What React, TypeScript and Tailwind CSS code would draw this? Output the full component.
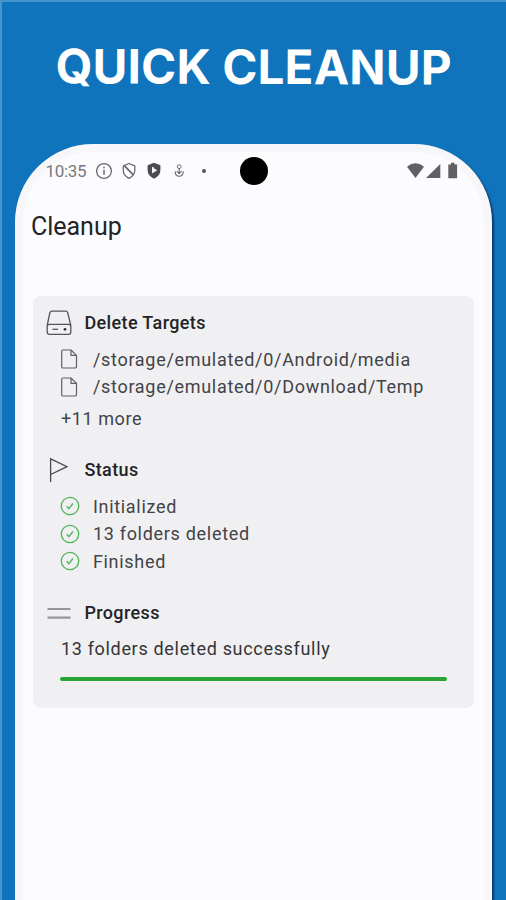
import type { ReactNode } from 'react';

const targets = ['/storage/emulated/0/Android/media', '/storage/emulated/0/Download/Temp'];
const steps = ['Initialized', '13 folders deleted', 'Finished'];

function DriveIcon() {
  return (
    <svg width="26" height="26" viewBox="0 0 26 26" fill="none" stroke="#55565a" strokeWidth="1.3" strokeLinejoin="round">
      <path d="M1.2 15.5 3.8 3Q4.3 1.2 6 1.2H19.6Q21.3 1.2 21.8 3L24.8 15.5" />
      <rect x="1.2" y="14.3" width="23.6" height="10" rx="2.2" />
      <path d="M6.5 19.3h5.5" />
      <circle cx="19" cy="19.3" r="1.4" fill="#333" stroke="none" />
    </svg>
  );
}

function FlagIcon() {
  return (
    <svg width="26" height="26" viewBox="0 0 26 26" fill="none" stroke="#4b4c50" strokeWidth="1.3">
      <path d="M4.6 25V1.8L21 9.7 4.6 17.5" />
    </svg>
  );
}

function LinesIcon() {
  return (
    <svg width="26" height="26" viewBox="0 0 26 26" stroke="#96979a" strokeWidth="2.2">
      <path d="M1.5 9h23M1.5 17.6h23" />
    </svg>
  );
}

function FileIcon() {
  return (
    <svg width="18" height="20" viewBox="0 0 18 20" fill="none" stroke="#606165" strokeWidth="1.2" strokeLinejoin="round">
      <path d="M1.7 2.2Q1.7 1 2.9 1H11l5.5 5.4V17.7q0 1.3-1.3 1.3H3q-1.3 0-1.3-1.3z" />
      <path d="M11 1v5.4h5.5" />
    </svg>
  );
}

function CheckIcon() {
  return (
    <svg width="20" height="20" viewBox="0 0 20 20" fill="none" stroke="#4db45a" strokeWidth="1.3">
      <circle cx="10" cy="10" r="8.7" />
      <path d="M6.7 10.3l2.2 2.4 4-5.2" />
    </svg>
  );
}

function StatusBar() {
  return (
    <div className="flex h-[39px] items-center pl-[22px] pr-[23px]">
      <span className="w-[51px] text-[17px] leading-[20px] tracking-[-0.3px] text-[#77787b]">10:35</span>
      <svg width="116" height="18" viewBox="96 162.500 116 18" fill="none" stroke="#6b6b6e" strokeWidth="1.3">
        <circle cx="104" cy="171.5" r="7.4" />
        <path d="M104 170.3v5M104 167.2v1.6" strokeWidth="1.5" />
        <path d="M123.3 166.3 129 164l5.8 2.300v4.500q0 5.200-5.800 8-5.700-2.800-5.700-8z" strokeLinejoin="round" />
        <path d="M124.500 166.300l8.800 9" strokeWidth="1.8" />
        <path d="M154 163.300l6.400 2.500v4.800q0 5.800-6.400 8.700-6.400-2.900-6.400-8.700v-4.800z" fill="#4c4c4f" stroke="none" />
        <path d="M152 167.400h1.600v1l3.700 2.300-5.300 3.300z" fill="#f4f4f6" stroke="none" />
        <circle cx="179.200" cy="167.200" r="1.9" strokeWidth="1" />
        <path d="M179.200 169v5M176.800 171.700l2.400 2.400 2.400-2.400" strokeWidth="1.1" />
        <path d="M175.200 171.700q0 5 4 5t4-5" strokeWidth="1.1" />
        <circle cx="204" cy="171.500" r="2" fill="#55565a" stroke="none" />
      </svg>
      {/* camera cutout */}
      <span className="ml-[28px] h-[28px] w-[28px] rounded-full bg-black" />
      <svg className="ml-auto" width="56" height="18" viewBox="404 162.500 56 18" fill="#606063">
        <path d="M406 167.200q8.500-6.800 17 0L414.500 178.500z" />
        <path d="M439.300 164.500v14H425z" />
        <path d="M449.900 163.300h3.600v1.600h2.600v13.800h-8.800v-13.800h2.600z" />
      </svg>
    </div>
  );
}

function SectionTitle({ icon, children }: { icon: ReactNode; children: ReactNode }) {
  return (
    <div className="flex h-[28px] items-center gap-[12px] pl-[13px]">
      {icon}
      <h2 className="text-[18px] font-medium leading-[28px] tracking-[0.38px] text-[#222326]">{children}</h2>
    </div>
  );
}

function ItemRow({ icon, children }: { icon: ReactNode; children: ReactNode }) {
  return (
    <div className="flex h-[27.4px] items-center pl-[26.5px]">
      <span className="flex w-[33px] items-center">{icon}</span>
      {children}
    </div>
  );
}

export default function App() {
  return (
    <div className="h-[900px] w-[506px] overflow-hidden border-l-2 border-t-2 border-[#4694cd] bg-[#1074bc] font-[Roboto,sans-serif]">
      <h1 className="h-[141.5px] rotate-[0.2deg] whitespace-nowrap pl-[53.5px] pt-[36.5px] font-[Inter,sans-serif] text-[47.5px] font-bold leading-[56px] tracking-[0.2px] text-white">
        QUICK CLEANUP
      </h1>
      <div className="ml-[13.4px] h-[860px] w-[476.600px] rounded-t-[78px] border-[8px] border-[#f7f7f9] bg-[#fcfcfe] shadow-[2px_2px_2px_#083b70]">
        <StatusBar />
        <h2 className="mt-[17px] pl-[7.5px] text-[25px] font-normal leading-[38px] text-[#222326]">Cleanup</h2>
        <section className="ml-[10px] mt-[50px] h-[412px] w-[441px] rounded-[8px] bg-[#f0f0f2] pt-[13.500px] text-[18px] text-[#424347]">
          <SectionTitle icon={<DriveIcon />}>Delete Targets</SectionTitle>
          <div className="mt-[8.500px]">
            {targets.map((path) => (
              <ItemRow key={path} icon={<FileIcon />}>
                <span className="whitespace-nowrap tracking-[0.7px]">{path}</span>
              </ItemRow>
            ))}
          </div>
          <p className="mt-[7px] pl-[27.500px] leading-[24px] tracking-[0.6px]">+11 more</p>
          <div className="mt-[25px]">
            <SectionTitle icon={<FlagIcon />}>Status</SectionTitle>
          </div>
          <div className="mt-[8.500px]">
            {steps.map((step) => (
              <ItemRow key={step} icon={<CheckIcon />}>
                <span className="tracking-[0.7px]">{step}</span>
              </ItemRow>
            ))}
          </div>
          <div className="mt-[24px]">
            <SectionTitle icon={<LinesIcon />}>Progress</SectionTitle>
          </div>
          <p className="mt-[10px] pl-[27.500px] leading-[24px] tracking-[0.68px] text-[#333438]">13 folders deleted successfully</p>
          <div className="ml-[27px] mt-[16px] h-[4px] w-[387px] rounded-full bg-[#28a334]" />
        </section>
      </div>
    </div>
  );
}
